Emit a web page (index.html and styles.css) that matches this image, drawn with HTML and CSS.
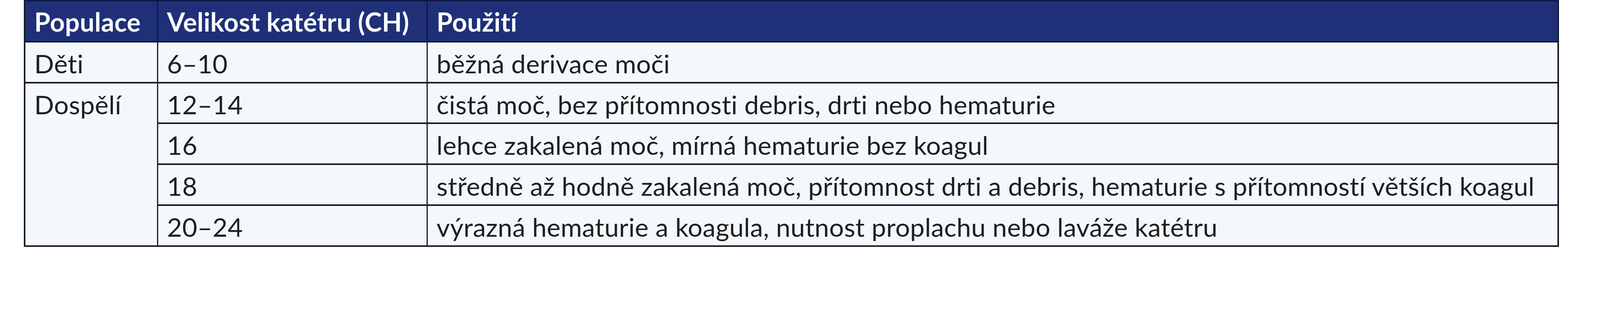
FILE: index.html
```html
<!DOCTYPE html>
<html lang="cs">
<head>
<meta charset="utf-8">
<title>Velikost katétru</title>
<link rel="stylesheet" href="styles.css">
</head>
<body>
<table class="cat-table">
  <colgroup>
    <col class="c-pop">
    <col class="c-size">
    <col class="c-use">
  </colgroup>
  <thead>
    <tr>
      <th>Populace</th>
      <th>Velikost katétru (CH)</th>
      <th>Použití</th>
    </tr>
  </thead>
  <tbody>
    <tr>
      <td>Děti</td>
      <td>6–10</td>
      <td>běžná derivace moči</td>
    </tr>
    <tr>
      <td rowspan="4">Dospělí</td>
      <td>12–14</td>
      <td>čistá moč, bez přítomnosti debris, drti nebo hematurie</td>
    </tr>
    <tr>
      <td>16</td>
      <td>lehce zakalená moč, mírná hematurie bez koagul</td>
    </tr>
    <tr>
      <td>18</td>
      <td>středně až hodně zakalená moč, přítomnost drti a debris, hematurie s přítomností větších koagul</td>
    </tr>
    <tr>
      <td>20–24</td>
      <td>výrazná hematurie a koagula, nutnost proplachu nebo laváže katétru</td>
    </tr>
  </tbody>
</table>
</body>
</html>
```
FILE: styles.css
```css
:root {
  /* one pixel of the 4690px-wide design */
  --u: calc(100vw / 4690);
}

html, body {
  margin: 0;
  padding: 0;
  background: #ffffff;
}

body {
  font-family: Lato, Roboto, "Liberation Sans", sans-serif;
}

.cat-table {
  margin-left: calc(70 * var(--u));
  width: calc(4500 * var(--u));
  table-layout: fixed;
  border-collapse: separate;
  border-spacing: 0;
  border-left: calc(5 * var(--u)) solid #161c26;
  border-top: calc(5 * var(--u)) solid #0e1b45;
}

.c-pop { width: calc(389 * var(--u)); }
.c-size { width: calc(790 * var(--u)); }
.c-use { width: calc(3316 * var(--u)); }

.cat-table th,
.cat-table td {
  box-sizing: border-box;
  height: calc(120 * var(--u));
  padding: calc(16 * var(--u)) 0 0 calc(26 * var(--u));
  vertical-align: top;
  text-align: left;
  font-size: calc(76 * var(--u));
  line-height: 1.2;
  letter-spacing: calc(0.4 * var(--u));
  white-space: nowrap;
  border-right: calc(4 * var(--u)) solid #161c26;
  border-bottom: calc(5 * var(--u)) solid #161c26;
}

.cat-table th:last-child,
.cat-table td:last-child {
  border-right-width: calc(5 * var(--u));
}

.cat-table th {
  padding-top: calc(14 * var(--u));
  background: #1f3079;
  color: #ffffff;
  font-weight: 700;
  border-bottom-color: #131c33;
  border-right-color: #121a36;
}

.cat-table td {
  background: #f3f8fd;
  color: #1f1f1f;
  font-weight: 400;
}
```
